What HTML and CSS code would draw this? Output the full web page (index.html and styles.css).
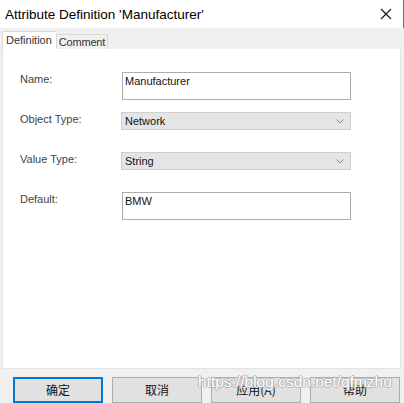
FILE: index.html
```html
<!DOCTYPE html>
<html>
<head>
<meta charset="utf-8">
<link rel="stylesheet" href="styles.css">
</head>
<body>
<div class="dialog">
  <div class="titlebar">
    <span class="title">Attribute Definition 'Manufacturer'</span>
    <svg class="close" width="12" height="12" viewBox="0 0 12 12"><path d="M1 1 L11 11 M11 1 L1 11" stroke="#111" stroke-width="1.1" fill="none"/></svg>
  </div>
  <div class="body">
    <div class="tabs">
      <div class="tab active">Definition</div>
      <div class="tab">Comment</div>
    </div>
    <div class="panel">
      <div class="row row-name">
        <div class="label">Name:</div>
        <div class="input">Manufacturer</div>
      </div>
      <div class="row row-obj">
        <div class="label">Object Type:</div>
        <div class="select"><span>Network</span><svg width="8" height="5" viewBox="0 0 8 5"><path d="M0.5 0.5 L4 4 L7.5 0.5" stroke="#888" stroke-width="1" fill="none"/></svg></div>
      </div>
      <div class="row row-val">
        <div class="label">Value Type:</div>
        <div class="select"><span>String</span><svg width="8" height="5" viewBox="0 0 8 5"><path d="M0.5 0.5 L4 4 L7.5 0.5" stroke="#888" stroke-width="1" fill="none"/></svg></div>
      </div>
      <div class="row row-def">
        <div class="label">Default:</div>
        <div class="input">BMW</div>
      </div>
    </div>
    <div class="buttons">
      <div class="btn primary">确定</div>
      <div class="btn">取消</div>
      <div class="btn">应用(A)</div>
      <div class="btn">帮助</div>
    </div>
    <div class="watermark">https://blog.csdn.net/qfmzhu</div>
  </div>
</div>
</body>
</html>
```

FILE: styles.css
```css
* { box-sizing: border-box; }
html, body { margin: 0; padding: 0; }
body {
  width: 404px;
  height: 403px;
  overflow: hidden;
  background: #f0f0f0;
  font-family: "Liberation Sans", Arial, "Noto Sans CJK SC", sans-serif;
}
.dialog { width: 404px; height: 403px; display: flex; flex-direction: column; }
.titlebar {
  height: 28px;
  background: #fff;
  border-right: 1px solid #2a7ad2;
  display: flex;
  align-items: center;
  justify-content: space-between;
  padding: 0 11px 0 5px;
}
.title { font-size: 13.5px; color: #000; }
.close { display: block; }
.body { position: relative; flex: 1; display: flex; flex-direction: column; }
.tabs { display: flex; align-items: flex-end; padding: 3px 0 0 2px; height: 21px; }
.tab {
  font-size: 11px;
  color: #333;
  border: 1px solid #d9d9d9;
  border-bottom: none;
  background: #f0f0f0;
  height: 15px;
  line-height: 14px;
  padding: 0 2px;
  letter-spacing: -0.2px;
}
.tab.active {
  background: #fff;
  height: 18px;
  line-height: 17px;
  border-right: none;
  padding: 0 4px 0 3px;
  letter-spacing: 0;
}
.panel {
  margin: 0 3px 0 2px;
  height: 320px;
  background: #fff;
  border: 1px solid #e3e3e3;
  border-top: none;
  padding-top: 23px;
  display: flex;
  flex-direction: column;
}
.row { display: flex; align-items: flex-start; padding-left: 17px; }
.label { width: 101px; font-size: 11px; color: #444; padding-top: 1px; }
.row-obj { margin-top: 12px; }
.row-val, .row-def { margin-top: 22px; }
.input {
  margin-left: 1px;
  width: 229px;
  height: 28px;
  border: 1px solid #acacac;
  font-size: 11px;
  color: #111;
  padding: 2px 0 0 2px;
}
.select {
  width: 230px;
  height: 18px;
  background: #e5e5e5;
  border: 1px solid #cfcfcf;
  font-size: 11px;
  color: #111;
  display: flex;
  align-items: center;
  justify-content: space-between;
  padding: 0 6px 0 3px;
}
.select svg { display: block; }
.buttons { display: flex; gap: 9px; padding: 8px 0 0 13px; }
.btn {
  width: 90px;
  height: 26px;
  background: #e1e1e1;
  border: 1px solid #adadad;
  font-family: "Noto Sans CJK SC", sans-serif;
  font-size: 12px;
  color: #111;
  text-align: center;
  line-height: 24px;
  flex: none;
}
.btn.primary { border: 2px solid #0078d7; line-height: 22px; }
.watermark {
  position: absolute;
  left: 198px;
  top: 345px;
  font-family: "Liberation Sans", Arial, sans-serif;
  font-size: 15.5px;
  color: #fff;
  text-shadow: 1px 0 0 #b5b5b5, -1px 0 0 #b5b5b5, 0 1px 0 #b5b5b5, 0 -1px 0 #b5b5b5;
  white-space: nowrap;
}
```
